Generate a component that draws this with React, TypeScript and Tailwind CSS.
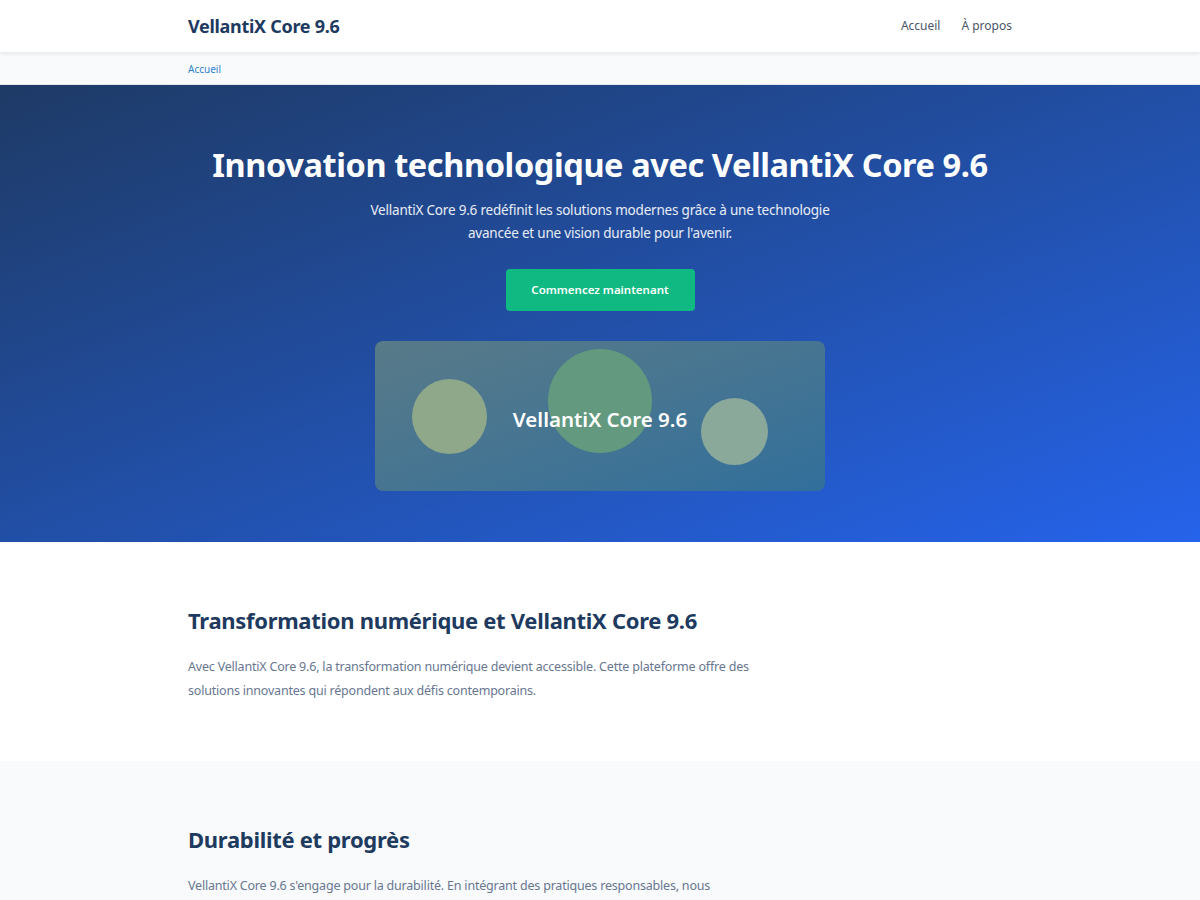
const sans = { fontFamily: '"Noto Sans", "Open Sans", sans-serif' }

function Header() {
  return (
    <header className="relative z-10 h-[52px] bg-white shadow-[0_2px_4px_rgba(0,0,0,0.08)]">
      <div className="mx-auto flex h-full max-w-[824px] items-center justify-between">
        <a href="#" className="text-[18px] font-bold tracking-[-0.3px] text-[#1e3a5f]">
          VellantiX Core 9.6
        </a>
        <nav className="flex items-center gap-[21px] text-[12px] text-[#4a5568]">
          <a href="#">Accueil</a>
          <a href="#">À propos</a>
        </nav>
      </div>
    </header>
  )
}

function Breadcrumb() {
  return (
    <div className="h-[33px] border-b border-[#e5e7eb] bg-[#f8fafc]">
      <div className="mx-auto flex h-full max-w-[824px] items-center pt-[2px]">
        <a href="#" className="text-[10px] text-[#3182ce]">
          Accueil
        </a>
      </div>
    </div>
  )
}

function Hero() {
  return (
    <section className="bg-gradient-to-br from-[#1e3a66] to-[#2563eb] pt-[60px] pb-[51px] text-center text-white">
      <h1 className="text-[32.5px] leading-[40px] font-bold tracking-[-0.4px]">
        Innovation technologique avec VellantiX Core 9.6
      </h1>
      <p className="mx-auto mt-[14px] max-w-[480px] text-[13.5px] leading-[23px] tracking-[-0.2px] text-white/90">
        VellantiX Core 9.6 redéfinit les solutions modernes grâce à une technologie avancée et une
        vision durable pour l'avenir.
      </p>
      <button className="mt-[24px] h-[42px] w-[189px] rounded-[4px] bg-[#10b981] text-[11.5px] font-semibold text-white">
        Commencez maintenant
      </button>
      <div className="relative mx-auto mt-[30px] h-[150px] w-[450px] overflow-hidden rounded-lg bg-gradient-to-br from-[#587a88] to-[#316f9b]">
        <div className="absolute left-[37px] top-[38px] h-[75px] w-[75px] rounded-full bg-[#8fa88a]" />
        <div className="absolute left-[173px] top-[8px] h-[104px] w-[104px] rounded-full bg-[#62997f]" />
        <div className="absolute left-[326px] top-[57px] h-[67px] w-[67px] rounded-full bg-[#8aa99b]" />
        <div className="relative flex h-full items-center justify-center pt-[7px]">
          <span className="text-[20.5px] font-semibold">VellantiX Core 9.6</span>
        </div>
      </div>
    </section>
  )
}

function Block({ title, text, alt }: { title: string; text: string; alt?: boolean }) {
  return (
    <section className={alt ? 'bg-[#f8fafc] pt-[62px] pb-[58px]' : 'bg-white pt-[62px] pb-[58px]'}>
      <div className="mx-auto max-w-[824px]">
        <h2 className="text-[22px] leading-[32px] font-bold tracking-[-0.3px] text-[#1e3a5f]">
          {title}
        </h2>
        <p className="mt-[19px] max-w-[580px] text-[12.5px] leading-[24px] tracking-[-0.2px] text-[#687690]">
          {text}
        </p>
      </div>
    </section>
  )
}

export default function App() {
  return (
    <div style={sans} className="min-h-screen bg-white">
      <Header />
      <Breadcrumb />
      <Hero />
      <Block
        title="Transformation numérique et VellantiX Core 9.6"
        text="Avec VellantiX Core 9.6, la transformation numérique devient accessible. Cette plateforme offre des solutions innovantes qui répondent aux défis contemporains."
      />
      <Block
        alt
        title="Durabilité et progrès"
        text="VellantiX Core 9.6 s'engage pour la durabilité. En intégrant des pratiques responsables, nous contribuons à un avenir plus vert et plus équitable pour tous."
      />
    </div>
  )
}
